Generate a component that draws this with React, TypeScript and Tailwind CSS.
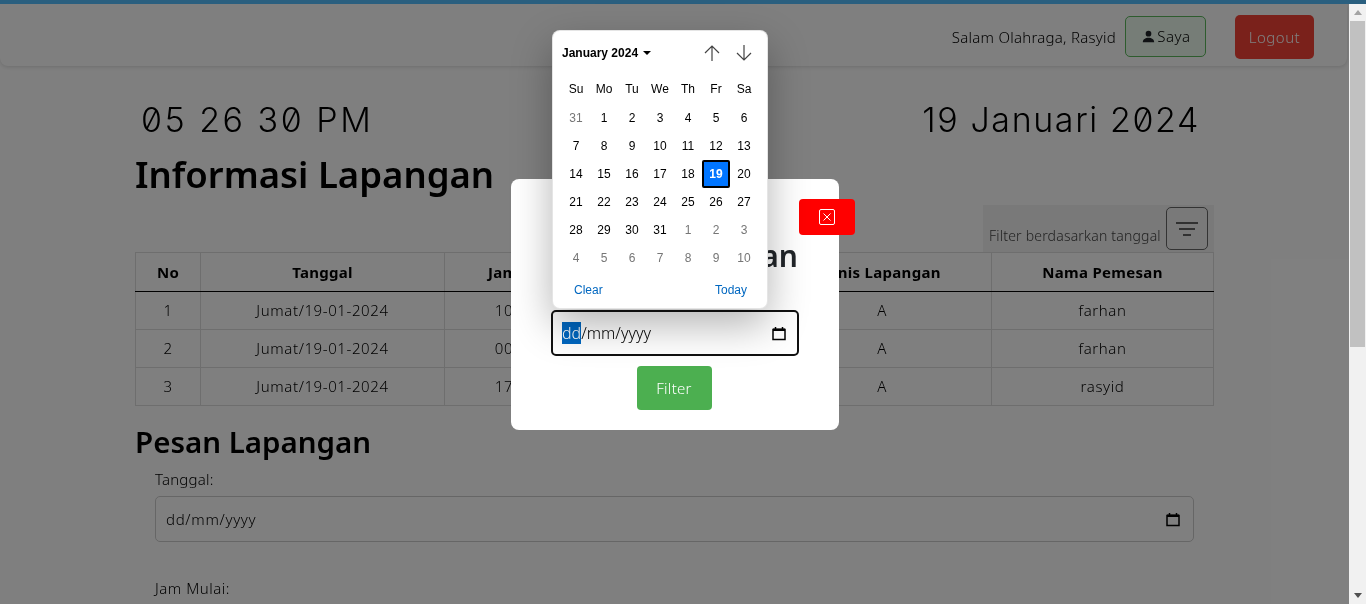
import React from "react";

const font = { fontFamily: '"Noto Sans", sans-serif' };
const rows = [
  ["1", "Jumat/19-01-2024", "10:00:00", "11:00:00", "A", "farhan"],
  ["2", "Jumat/19-01-2024", "00:00:00", "01:00:00", "A", "farhan"],
  ["3", "Jumat/19-01-2024", "17:00:00", "18:00:00", "A", "rasyid"],
];
const weeks = [
  [31, 1, 2, 3, 4, 5, 6],
  [7, 8, 9, 10, 11, 12, 13],
  [14, 15, 16, 17, 18, 19, 20],
  [21, 22, 23, 24, 25, 26, 27],
  [28, 29, 30, 31, 1, 2, 3],
  [4, 5, 6, 7, 8, 9, 10],
];
const muted = (r: number, c: number) => (r === 0 && c === 0) || (r === 4 && c > 3) || r === 5;

function CalIcon() {
  return (
    <svg width="14" height="15" viewBox="0 0 14 15" fill="none">
      <path d="M1 3.5h12v10H1z" stroke="#000" strokeWidth="1.5" />
      <path d="M1 2.5h12V5H1z" fill="#000" />
      <path d="M3.5 1v2M10.500 1v2" stroke="#000" strokeWidth="1.500" />
    </svg>
  );
}

function Calendar() {
  return (
    <div
      className="absolute left-[552px] top-[30px] w-[216px] h-[279px] bg-white rounded-lg will-change-transform shadow-[0_16px_40px_rgba(0,0,0,0.3)] border border-black/10 text-black"
      style={{ fontFamily: '"Liberation Sans", Arial, sans-serif' }}
    >
      <div className="flex items-center h-[44px] pl-[9px]">
        <span className="text-[12px] font-bold">January 2024</span>
        <svg className="ml-[5px]" width="8" height="4" viewBox="0 0 8 4"><path d="M0 0h8L4 4z" fill="#000" /></svg>
        <svg className="ml-[52px]" width="18" height="18" viewBox="0 0 18 18" fill="none" stroke="#444" strokeWidth="1.200">
          <path d="M9 17V2M2 9l7-7 7 7" />
        </svg>
        <svg className="ml-[14px]" width="18" height="18" viewBox="0 0 18 18" fill="none" stroke="#444" strokeWidth="1.200">
          <path d="M9 1v15M2 9l7 7 7-7" />
        </svg>
      </div>
      <div className="px-[9px]">
        <div className="grid grid-cols-7 w-[196px] h-[27px] mb-[2px] items-center text-center text-[12px]">
          {["Su", "Mo", "Tu", "We", "Th", "Fr", "Sa"].map((d) => <span key={d}>{d}</span>)}
        </div>
        {weeks.map((w, r) => (
          <div key={r} className="grid grid-cols-7 w-[196px] h-[28px] items-center justify-items-center text-[12px]">
            {w.map((d, c) =>
              d === 19 ? (
                <span key={c} className="w-[28px] h-[28px] bg-[#0075ff] border-2 border-black rounded-[2px] text-white font-bold flex items-center justify-center">{d}</span>
              ) : (
                <span key={c} className={muted(r, c) ? "text-[#767676]" : ""}>{d}</span>
              )
            )}
          </div>
        ))}
      </div>
      <div className="flex justify-between pl-[21px] pr-[20px] mt-[9px] text-[12px] text-[#0067c0]">
        <span>Clear</span>
        <span>Today</span>
      </div>
    </div>
  );
}

function Modal() {
  return (
    <div className="absolute left-[511px] top-[179px] w-[328px] h-[251px] bg-white rounded-lg will-change-transform" style={font}>
      <div className="h-[20px]" />
      <div className="flex justify-end">
        <button className="-mr-[16px] w-[56px] h-[36px] bg-[#ff0000] rounded-[4px] flex items-center justify-center">
          <svg width="16" height="16" viewBox="0 0 16 16" fill="none" stroke="#fff" strokeWidth="1">
            <rect x="0.500" y="0.500" width="15" height="15" rx="1.500" />
            <path d="M4.500 4.500l7 7M11.500 4.500l-7 7" />
          </svg>
        </button>
      </div>
      <h2 className="text-[30px] leading-[36px] font-semibold text-right text-[#212529] whitespace-nowrap mt-[3px] mr-[41px]">Filter Lapangan</h2>
      <div className="mx-[40px] mt-[36px] w-[248px] h-[46px] border-[2.5px] border-[#111111] rounded-[5px] flex items-center pl-[9px] pr-[11px] justify-between">
        <span className="text-[16px] font-light text-black"><span className="bg-[#0067c0] text-white">dd</span>/mm/yyyy</span>
        <CalIcon />
      </div>
      <div className="flex justify-center mt-[10px] pr-[2px]">
        <button className="w-[75px] h-[44px] bg-[#4caf50] rounded-[4px] text-white text-[15px] font-light tracking-[0.3px]">Filter</button>
      </div>
    </div>
  );
}

function Page() {
  return (
    <div className="flex-1 min-w-0 h-[600px] overflow-hidden bg-white text-black font-light" style={font}>
      <nav className="box-border h-[62px] pt-[4px] bg-[#fefefe] rounded-b-lg mr-[2px] shadow-[0_1px_4px_rgba(0,0,0,0.15)] flex items-center justify-end pr-[33px]">
        <span className="text-[15px] tracking-[0.25px] mr-[9px]">Salam Olahraga, Rasyid</span>
        <button className="-mt-[1px] w-[81px] h-[41px] border border-[#5cb85c] rounded-[5px] bg-[#ecfbee] text-[15px] tracking-[0.5px] flex items-center justify-center gap-[2px] pl-[2px]">
          <svg width="13" height="13" viewBox="0 0 16 16" fill="#212529">
            <path d="M8 8a3.500 3.500 0 1 0 0-7 3.500 3.500 0 0 0 0 7zM1 15c0-3.500 3-5.500 7-5.500s7 2 7 5.500z" />
          </svg>
          Saya
        </button>
        <button className="ml-[29px] w-[79px] h-[44px] bg-[#f44336] rounded-[5px] text-white text-[15px] tracking-[0.5px]">Logout</button>
      </nav>
      <div className="ml-[135px] w-[1079px]">
        <div className="flex justify-between items-center h-[38px] mt-[34px] pl-[6px] pr-[14px] text-black" style={{ fontFamily: "Inter, sans-serif" }}>
          <span className="text-[34px] font-light slashed-zero tracking-[2.5px]">05 26 30 PM</span>
          <span className="text-[34px] font-light slashed-zero tracking-[1.6px]">19 Januari 2024</span>
        </div>
        <h1 className="text-[36.5px] leading-[44px] font-semibold mt-[14px]">Informasi Lapangan</h1>
        <div className="flex justify-end h-[47px] mt-[9px]">
          <div className="w-[231px] bg-[#f2f2f2] flex items-end pl-[6px] pb-[6px]">
            <span className="text-[14px] tracking-[0.2px] text-[#444]">Filter berdasarkan tanggal</span>
            <button className="ml-[5px] mb-[-4px] w-[42px] h-[43px] border border-[#666] rounded-[5px] flex items-center justify-center">
              <svg width="22" height="14" viewBox="0 0 22 14" stroke="#333" strokeWidth="1.500"><path d="M0 1h22M3 7h16M7 13h8" /></svg>
            </button>
          </div>
        </div>
        <table className="w-full border-collapse table-fixed text-[15px]">
          <colgroup>
            <col className="w-[65px]" /><col className="w-[244px]" /><col className="w-[164px]" /><col className="w-[164px]" /><col className="w-[219px]" /><col />
          </colgroup>
          <thead>
            <tr className="h-[39px]">
              {["No", "Tanggal", "Jam Mulai", "Jam Selesai", "Jenis Lapangan", "Nama Pemesan"].map((h) => (
                <th key={h} className="border border-[#dddddd] border-b-black font-bold text-center text-black tracking-[0.3px]">{h}</th>
              ))}
            </tr>
          </thead>
          <tbody>
            {rows.map((r) => (
              <tr key={r[0]} className="h-[38px]">
                {r.map((c, i) => <td key={i} className="border border-[#dddddd] text-center tracking-[0.6px]">{c}</td>)}
              </tr>
            ))}
          </tbody>
        </table>
        <h2 className="text-[29.5px] leading-[36px] font-semibold mt-[18px]">Pesan Lapangan</h2>
        <div className="ml-[20px] w-[1039px] mt-[9px]">
          <label className="block text-[15px] leading-[20px] tracking-[0.2px]">Tanggal:</label>
          <div className="mt-[7px] h-[46px] border border-[#cccccc] rounded-[5px] flex items-center justify-between pl-[10px] pr-[13px]">
            <span className="text-[15px] tracking-[0.7px]">dd/mm/yyyy</span>
            <CalIcon />
          </div>
          <label className="block text-[15px] leading-[20px] mt-[36px] tracking-[0.5px]">Jam Mulai:</label>
        </div>
      </div>
    </div>
  );
}

function Scrollbar() {
  return (
    <div className="w-[17px] h-[600px] bg-[#f1f1f1] flex flex-col items-center shrink-0">
      <div className="h-[17px] flex items-center justify-center">
        <svg width="8" height="5" viewBox="0 0 8 5"><path d="M0 5h8L4 0z" fill="#a3a3a3" /></svg>
      </div>
      <div className="w-[15px] h-[326px] bg-[#c1c1c1]" />
      <div className="flex-1" />
      <div className="h-[17px] flex items-center justify-center">
        <svg width="8" height="5" viewBox="0 0 8 5"><path d="M0 0h8L4 5z" fill="#505050" /></svg>
      </div>
    </div>
  );
}

export default function App() {
  return (
    <div className="relative w-[1366px] h-[604px] overflow-hidden">
      <div className="h-[4px] bg-[#2a5f7f]" />
      <div className="flex">
        <div className="relative flex-1 min-w-0 will-change-transform">
          <Page />
          <div className="absolute inset-0 bg-black/50" />
        </div>
        <Scrollbar />
      </div>
      <Modal />
      <Calendar />
    </div>
  );
}
